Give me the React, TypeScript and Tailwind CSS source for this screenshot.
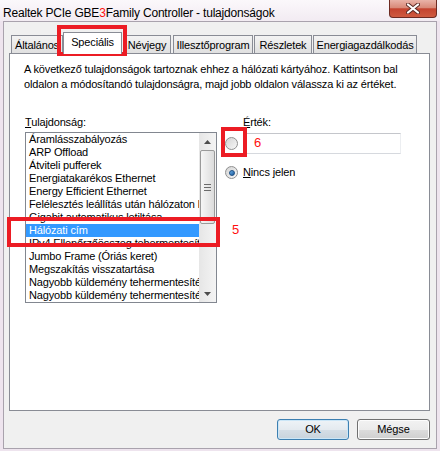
import React from 'react';

const tabs = [
  { label: 'Általános', className: 'w-[52px]' },
  { label: 'Speciális', className: 'w-[59px]', active: true },
  { label: 'Névjegy', className: 'w-[48px] ml-[1px]' },
  { label: 'Illesztőprogram', className: 'w-[80px] ml-[2px]' },
  { label: 'Részletek', className: 'w-[58px] ml-[1px]' },
  { label: 'Energiagazdálkodás', className: 'w-[104px] ml-[1px]' },
];

const properties = [
  'Áramlásszabályozás',
  'ARP Offload',
  'Átviteli pufferek',
  'Energiatakarékos Ethernet',
  'Energy Efficient Ethernet',
  'Felélesztés leállítás után hálózaton keresztül',
  'Gigabit automatikus letiltása',
  'Hálózati cím',
  'IPv4 Ellenőrzőösszeg tehermentesítés',
  'Jumbo Frame (Óriás keret)',
  'Megszakítás visszatartása',
  'Nagyobb küldemény tehermentesítés (IPv4)',
  'Nagyobb küldemény tehermentesítés (IPv6)',
];

function Radio({ checked }: { checked?: boolean }) {
  return (
    <div className="w-[13px] h-[13px] rounded-full border border-[#8f8f8f] bg-gradient-to-br from-[#d3d3d3] to-[#f8f8f8] flex items-center justify-center shrink-0">
      {checked && (
        <div className="w-[6px] h-[6px] rounded-full bg-gradient-to-br from-[#6ab0ea] to-[#1b5a9a] border border-[#1d4f84]" />
      )}
    </div>
  );
}

function Arrow({ up }: { up?: boolean }) {
  return (
    <svg width="7" height="4" viewBox="0 0 7 4">
      <path d={up ? 'M0 4 L3.5 0 L7 4 Z' : 'M0 0 L7 0 L3.5 4 Z'} fill="#4d4d4d" />
    </svg>
  );
}

export default function App() {
  return (
    <div className="relative w-[440px] h-[451px] overflow-hidden bg-[#eee4ee] font-['Liberation_Sans',Arial,sans-serif] text-[11px] text-black tracking-[-0.15px]">
      {/* title bar */}
      <div className="h-[21px] flex items-start bg-gradient-to-b from-[#fbf8fb] to-[#f2ebf2]">
        <div className="pl-[3px] pt-[6px] leading-[14px] text-[12px] tracking-[-0.2px] whitespace-nowrap">
          Realtek PCIe GBE<span className="text-[#ff1010]">3</span>Family Controller - tulajdonságok
        </div>
        <div className="ml-auto mr-[3px] w-[48px] h-[18px] rounded-b-[4px] border border-t-0 border-[#6d2a22] bg-[linear-gradient(to_bottom,#e9b3a8_0%,#d98a79_45%,#c4432f_52%,#cf5a40_100%)] flex items-center justify-center">
          <svg width="14" height="11" viewBox="0 0 14 11">
            <path d="M2 1.5 L12 9.5 M12 1.5 L2 9.5" stroke="#5a2a25" strokeWidth="4" strokeLinecap="round" />
            <path d="M2 1.5 L12 9.5 M12 1.5 L2 9.5" stroke="#ffffff" strokeWidth="2.2" strokeLinecap="round" />
          </svg>
        </div>
      </div>

      {/* client area */}
      <div className="mx-[3px] h-[428px] border border-[#a9a2ad] bg-[#f0f0f0] flex flex-col">
        <div className="mt-[10px] pl-[7px] h-[21px] flex items-end">
          {tabs.map((tab) =>
            tab.active ? (
              <div
                key={tab.label}
                className={`${tab.className} relative z-10 h-[22px] -mb-px bg-white border border-b-0 border-[#898c95] flex items-center justify-center pb-[2px]`}
              >
                {tab.label}
              </div>
            ) : (
              <div
                key={tab.label}
                className={`${tab.className} h-[18px] bg-gradient-to-b from-[#f3f3f3] to-[#e0e0e0] border border-b-0 border-[#898c95] flex items-center justify-center pt-[2px]`}
              >
                {tab.label}
              </div>
            )
          )}
        </div>

        <div className="ml-[5px] w-[421px] h-[358px] border border-[#898c95] bg-white flex flex-col">
          <p className="pt-[8px] pl-[14px] leading-[15px]">
            A következő tulajdonságok tartoznak ehhez a hálózati kártyához. Kattintson bal
            <br />
            oldalon a módosítandó tulajdonságra, majd jobb oldalon válassza ki az értéket.
          </p>

          <div className="mt-[23px] flex">
            <div className="ml-[15px] w-[192px]">
              <div className="h-[15px] leading-[15px]">
                <span className="underline">T</span>ulajdonság:
              </div>
              <div className="mt-[2px] h-[171px] border border-[#828790] flex">
                <div className="flex-1 min-w-0">
                  {properties.map((p) => (
                    <div
                      key={p}
                      className={`h-[13px] leading-[13px] pl-[3px] whitespace-nowrap overflow-hidden ${
                        p === 'Hálózati cím' ? 'bg-[#3399ff] text-white' : ''
                      }`}
                    >
                      {p}
                    </div>
                  ))}
                </div>
                <div className="w-[17px] flex flex-col bg-gradient-to-r from-[#e6e6e6] to-[#f4f4f4]">
                  <div className="h-[17px] flex items-center justify-center">
                    <Arrow up />
                  </div>
                  <div className="flex-1">
                    <div className="mx-[1px] h-[74px] rounded-[2px] border border-[#9a9a9a] bg-gradient-to-r from-[#f6f6f6] to-[#dcdcdc] flex flex-col items-center justify-center gap-[2px]">
                      <div className="w-[7px] h-px bg-[#6b6b6b]" />
                      <div className="w-[7px] h-px bg-[#6b6b6b]" />
                      <div className="w-[7px] h-px bg-[#6b6b6b]" />
                    </div>
                  </div>
                  <div className="h-[17px] flex items-center justify-center">
                    <Arrow />
                  </div>
                </div>
              </div>
            </div>

            <div className="ml-[8px]">
              <div className="h-[15px] leading-[15px] pl-[18px]">
                <span className="underline">É</span>rték:
              </div>
              <div className="mt-[3px] h-[21px] flex items-center">
                <Radio />
                <div className="ml-[5px] w-[158px] h-[21px] border border-t-[#c4c6cb] border-b-[#d6d9de] border-x-[#eceef1]" />
              </div>
              <div className="mt-[11px] h-[15px] flex items-center">
                <Radio checked />
                <span className="ml-[5px] leading-[15px]">
                  <span className="underline">N</span>incs jelen
                </span>
              </div>
            </div>
          </div>
        </div>

        <div className="mt-[8px] pr-[6px] flex justify-end gap-[8px]">
          <button className="w-[72px] h-[21px] rounded-[3px] border border-[#3c7fb1] bg-[linear-gradient(to_bottom,#eef3f7_0%,#e4eaef_50%,#d5dee6_51%,#c8d3dc_100%)] shadow-[inset_0_0_0_1px_#cbe6f7]">
            OK
          </button>
          <button className="w-[73px] h-[21px] rounded-[3px] border border-[#707070] bg-[linear-gradient(to_bottom,#f2f2f2_0%,#ebebeb_50%,#dddddd_51%,#cfcfcf_100%)] shadow-[inset_0_0_0_1px_#fcfcfc]">
            Mégse
          </button>
        </div>
      </div>

      {/* red annotations */}
      <div className="absolute left-[57px] top-[25px] w-[70px] h-[31px] border-4 border-[#ec1c24]" />
      <div className="absolute left-[7px] top-[217px] w-[213px] h-[30px] border-4 border-[#ec1c24]" />
      <div className="absolute left-[221px] top-[127px] w-[26px] h-[30px] border-4 border-[#ec1c24]" />
      <div className="absolute left-[232px] top-[222px] text-[13px] leading-[16px] text-[#ff1010]">5</div>
      <div className="absolute left-[254px] top-[135px] text-[13px] leading-[16px] text-[#ff1010]">6</div>
    </div>
  );
}
